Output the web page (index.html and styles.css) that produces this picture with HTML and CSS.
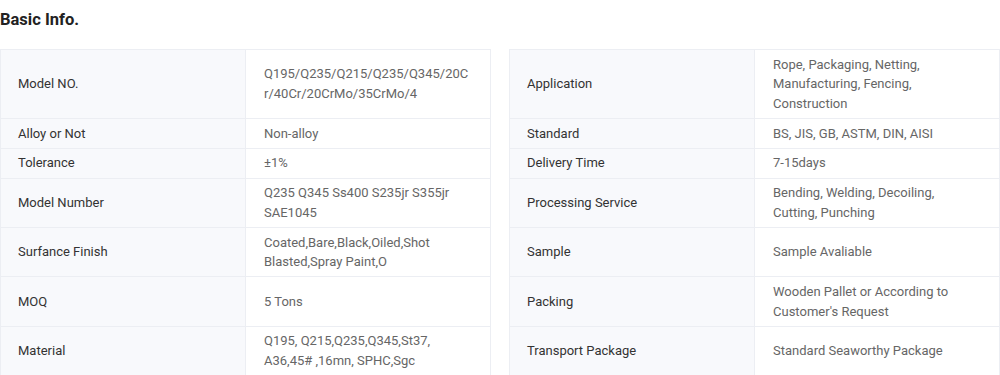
FILE: index.html
```html
<!DOCTYPE html>
<html lang="en">
<head>
<meta charset="utf-8">
<title>Basic Info.</title>
<link rel="stylesheet" href="styles.css">
</head>
<body>
<section class="basic-info">
  <h2 class="title">Basic Info.</h2>
  <div class="spec-grid">
    <div class="cell label first top">Model NO.</div>
    <div class="cell value top">Q195/Q235/Q215/Q235/Q345/20Cr/40Cr/20CrMo/35CrMo/4</div>
    <div class="gap"></div>
    <div class="cell label first top">Application</div>
    <div class="cell value top">Rope, Packaging, Netting, Manufacturing, Fencing, Construction</div>

    <div class="cell label first">Alloy or Not</div>
    <div class="cell value">Non-alloy</div>
    <div class="gap"></div>
    <div class="cell label first">Standard</div>
    <div class="cell value">BS, JIS, GB, ASTM, DIN, AISI</div>

    <div class="cell label first">Tolerance</div>
    <div class="cell value">±1%</div>
    <div class="gap"></div>
    <div class="cell label first">Delivery Time</div>
    <div class="cell value">7-15days</div>

    <div class="cell label first">Model Number</div>
    <div class="cell value">Q235 Q345 Ss400 S235jr S355jr SAE1045</div>
    <div class="gap"></div>
    <div class="cell label first">Processing Service</div>
    <div class="cell value">Bending, Welding, Decoiling, Cutting, Punching</div>

    <div class="cell label first">Surfance Finish</div>
    <div class="cell value">Coated,Bare,Black,Oiled,Shot Blasted,Spray Paint,O</div>
    <div class="gap"></div>
    <div class="cell label first">Sample</div>
    <div class="cell value">Sample Avaliable</div>

    <div class="cell label first">MOQ</div>
    <div class="cell value">5 Tons</div>
    <div class="gap"></div>
    <div class="cell label first">Packing</div>
    <div class="cell value">Wooden Pallet or According to Customer's Request</div>

    <div class="cell label first">Material</div>
    <div class="cell value">Q195, Q215,Q235,Q345,St37, A36,45# ,16mn, SPHC,Sgc</div>
    <div class="gap"></div>
    <div class="cell label first">Transport Package</div>
    <div class="cell value">Standard Seaworthy Package</div>
  </div>
</section>
</body>
</html>
```

FILE: styles.css
```css
* { box-sizing: border-box; }
html, body {
  margin: 0;
  padding: 0;
  background: #ffffff;
  font-family: Roboto, "Liberation Sans", Arial, sans-serif;
}
.basic-info {
  width: 1000px;
}
.title {
  margin: 0 0 17px 0;
  padding-top: 8px;
  font-size: 16.5px;
  line-height: 24px;
  font-weight: 700;
  color: #222222;
}
.spec-grid {
  display: grid;
  grid-template-columns: 246px 245px 18px 246px 245px;
}
.cell {
  display: flex;
  align-items: center;
  padding: 4.7px 18px 4.7px 18px;
  font-size: 13px;
  line-height: 19.5px;
  border-right: 1px solid #eceef3;
  border-bottom: 1px solid #eceef3;
  overflow-wrap: anywhere;
}
.cell.first {
  border-left: 1px solid #eceef3;
  padding-left: 17px;
}
.cell.top {
  border-top: 1px solid #eceef3;
}
.label {
  background: #f8f9fc;
  color: #333333;
}
.value {
  background: #ffffff;
  color: #666666;
}
.gap {
  background: #ffffff;
}
```
